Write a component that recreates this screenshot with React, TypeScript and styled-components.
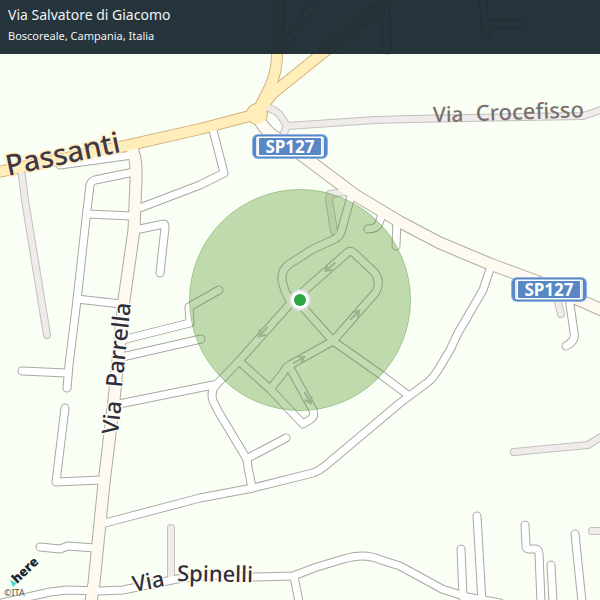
import React from "react";
import styled, { createGlobalStyle } from "styled-components";

const GlobalStyle = createGlobalStyle`
  *, *::before, *::after { box-sizing: border-box; }
  body { margin: 0; font-family: "Noto Sans", "Open Sans", sans-serif; background: #f9fff5; }
`;

const Page = styled.main`
  position: relative;
  min-height: 100vh;
  overflow: hidden;
`;

const MapCanvas = styled.svg`
  position: absolute;
  inset: 0;
  width: 100%;
  height: 100%;
  display: block;
`;

const Header = styled.header`
  position: relative;
  display: flex;
  flex-direction: column;
  gap: 3px;
  padding: 5px 8px 10px;
  background: rgba(19, 35, 42, 0.92);
  color: #eef3f5;
`;

const Title = styled.h1`
  margin: 0;
  font-size: 14px;
  line-height: 20px;
  font-weight: 400;
`;

const Place = styled.p`
  margin: 0;
  font-size: 11px;
  line-height: 16px;
`;

type Kind = "street" | "track" | "secondary" | "primary";

const roadStyle: Record<Kind, { fill: string; edge: string; width: number }> = {
  track: { fill: "#eeebea", edge: "#c4c0be", width: 6 },
  street: { fill: "#ffffff", edge: "#aaa7a4", width: 7 },
  secondary: { fill: "#fefaf0", edge: "#b0aaa4", width: 11 },
  primary: { fill: "#ffedba", edge: "#d3b27c", width: 10 },
};

const roads: Record<Kind, string[]> = {
  track: [
    "M264 107Q277 109 282 118L287 126L375 120L410 119L583 116L601 110",
    "M287 125L283 136",
    "M21 168L25 200L47 335",
    "M345 192L330 194L329 200L334 231",
    "M171 578V528",
    "M514 452L545 449L588 445L601 437",
    "M592 531H602",
    "M557 298L561 314",
  ],
  street: [
    "M213 130L224 173L200 185L137 209",
    "M60 165L132 155",
    "M134 172L95 180Q91 181 90 185L87 210L77 300L69 365L67 388",
    "M22 371L67 373",
    "M88 214L131 216",
    "M77 299L121 304",
    "M135 230L164 224Q165 224 165 228L160 273",
    "M122 340L190 323L189 307L219 290",
    "M122 357L201 339",
    "M114 405L213 385",
    "M352 192L350 200L341 232Q340 236 335 239L313 249L288 265Q281 271 282 280Q284 291 290 301",
    "M290 304L240 360L216 385Q210 391 213 401L218 411L245 456Q248 461 248 467L252 488",
    "M290 304L305 290L347 253Q350 250 354 253L375 273Q381 282 376 292L333 341L290 365Q286 367 283 373L271 388",
    "M293 296L333 341L380 374L408 395",
    "M239 361L271 390L303 424L311 419Q315 416 313 410L290 368",
    "M105 523L200 498L253 488L313 473Q319 471 325 466L400 403L424 385Q432 380 438 370L450 350L458 333L483 290L491 266",
    "M248 458L286 438",
    "M65 408L56 482L101 480",
    "M40 547L60 549L68 546L95 548",
    "M-3 604L50 592L67 590L100 591L123 590L177 579L210 575L257 577L293 576L317 567L347 558Q366 553 381 560L400 566L442 589L467 597L500 603",
    "M294 576L299 602",
    "M461 549L463 597",
    "M477 516L482 602",
    "M525 525L526 546Q526 549 529 549L535 549Q539 549 539 554L541 602",
    "M551 565L553 602",
    "M575 534L582 602",
    "M569 298L574 332Q576 341 566 346",
    "M383 212L379 223Q377 229 368 229",
    "M397 219L396 246",
    "M387 50L385 0",
    "M315 0Q302 22 283 47",
    "M483 0L486 35M486 25L524 23",
  ],
  secondary: [
    "M131 146Q137 158 136 180L134 230L124 300L114 400L104 483L94 583L91 602",
    "M257 114Q260 125 272 135L307 159L355 195L400 222L440 243L490 264L536 281L602 310",
  ],
  primary: [
    "M-2 172L125 146L200 129L257 114",
    "M257 113L270 87Q277 72 277 54L280 -2",
    "M257 113L273 93L319 56L390 -2",
  ],
};

const order: Kind[] = ["track", "street", "secondary", "primary"];

function Roads() {
  return (
    <g fill="none" strokeLinecap="round" strokeLinejoin="round">
      {order.map((kind) => (
        <g key={kind + "-edge"} stroke={roadStyle[kind].edge} strokeWidth={roadStyle[kind].width + 2}>
          {roads[kind].map((d) => <path key={d} d={d} />)}
          {kind === "primary" && <circle cx="257" cy="114" r="5" />}
        </g>
      ))}
      {order.map((kind) => (
        <g key={kind + "-fill"} stroke={roadStyle[kind].fill} strokeWidth={roadStyle[kind].width}>
          {roads[kind].map((d) => <path key={d} d={d} />)}
          {kind === "primary" && <circle cx="257" cy="114" r="5" fill={roadStyle.primary.fill} />}
        </g>
      ))}
    </g>
  );
}

const arrows = [
  { x: 330, y: 267, angle: 139 },
  { x: 263, y: 332, angle: 133 },
  { x: 355, y: 315, angle: -45 },
  { x: 299, y: 360, angle: -30 },
  { x: 308, y: 398, angle: 60 },
];

function Arrows() {
  return (
    <g stroke="#c4bfc6" strokeWidth="2" fill="none">
      {arrows.map(({ x, y, angle }) => (
        <path key={`${x}-${y}`} transform={`translate(${x} ${y}) rotate(${angle})`} d="M-7 0H6M0 -4L6 0L0 4" />
      ))}
    </g>
  );
}

const RoadName = styled.text<{ $size: number; $color?: string; $halo?: string }>`
  font-family: "Noto Sans", "Open Sans", sans-serif;
  font-size: ${(p) => p.$size}px;
  font-weight: 500;
  fill: ${(p) => p.$color ?? "#2f303b"};
  stroke: ${(p) => p.$halo ?? "#fffdf5"};
  stroke-width: 3px;
  stroke-linejoin: round;
  paint-order: stroke;
`;

const ShieldText = styled.text`
  font: 700 17px "Noto Sans", "Open Sans", sans-serif;
  fill: #ffffff;
  text-anchor: middle;
`;

const Brand = styled.text`
  font: 800 13px "Open Sans", "Noto Sans", sans-serif;
  fill: #20272c;
`;

const Credit = styled.text`
  font: 400 9px "Noto Sans", sans-serif;
  fill: #4c4f50;
`;

function Shield({ x, y, label }: { x: number; y: number; label: string }) {
  return (
    <g transform={`translate(${x} ${y})`}>
      <rect width="76" height="25" rx="6" fill="#8fb4e2" />
      <rect x="1" y="1" width="74" height="23" rx="5" fill="#5787c5" />
      <path fill="#ffffff" fillRule="evenodd" d="M6 2.5H70Q72 2.5 72 4.500V20.500Q72 22.500 70 22.500H6Q4 22.500 4 20.500V4.500Q4 2.500 6 2.500ZM8 4Q7 4 7 5V20Q7 21 8 21H68Q69 21 69 20V5Q69 4 68 4Z" />
      <path d="M5 4V21M71 4V21" stroke="#5787c5" strokeWidth="1" opacity="0.35" />
      <ShieldText x="38" y="19">{label}</ShieldText>
    </g>
  );
}

function AreaMap() {
  return (
    <MapCanvas viewBox="0 0 600 600" preserveAspectRatio="xMidYMid slice" role="img" aria-label="Map of Boscoreale">
      <rect width="600" height="600" fill="#f9fff5" />
      <Roads />
      <Arrows />
      <RoadName $size={29} $halo="#fff0c2" $color="#3f3848" transform="translate(8 176) rotate(-12)">Passanti</RoadName>
      <RoadName $size={21} $halo="none" $color="#7b706c" transform="translate(433 122) rotate(-1)">Via</RoadName>
      <RoadName $size={22} $halo="none" $color="#7b706c" transform="translate(476 121) rotate(-2)">Crocefisso</RoadName>
      <RoadName $size={23} transform="translate(118 435) rotate(-84)">Via</RoadName>
      <RoadName $size={23} transform="translate(122 388) rotate(-84)">Parrella</RoadName>
      <RoadName $size={22} transform="translate(134 592) rotate(-11)">Via</RoadName>
      <RoadName $size={22} transform="translate(177 581) rotate(1)">Spinelli</RoadName>
      <Shield x={252} y={134} label="SP127" />
      <Shield x={511} y={277} label="SP127" />
      <circle cx="300" cy="300" r="110.5" fill="rgb(79 149 36 / 0.34)" stroke="rgb(80 145 50 / 0.4)" />
      <circle cx="300" cy="300" r="11" fill="#dadfd7" />
      <circle cx="300" cy="300" r="9" fill="#ffffff" />
      <circle cx="300" cy="300" r="6" fill="#2ca63e" />
      <path d="M10 580L17 583L13 587Z" fill="#48dad0" />
      <Brand transform="translate(17 584) rotate(-44)">here</Brand>
      <Credit x="4" y="596">©ITA</Credit>
    </MapCanvas>
  );
}

export default function App() {
  return (
    <>
      <GlobalStyle />
      <Page>
        <AreaMap />
        <Header>
          <Title>Via Salvatore di Giacomo</Title>
          <Place>Boscoreale, Campania, Italia</Place>
        </Header>
      </Page>
    </>
  );
}
